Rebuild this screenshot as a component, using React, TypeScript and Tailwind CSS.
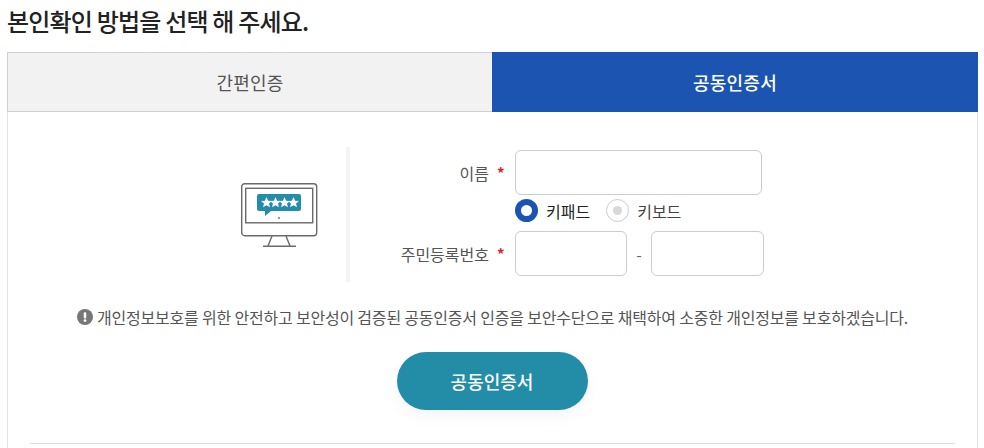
import React from 'react';

const font = { fontFamily: '"Noto Sans CJK KR", "Noto Sans", sans-serif' };

const Star = ({ x }: { x: number }) => (
  <path
    transform={`translate(${x} 14) scale(1.100)`}
    d="M5 0l1.400 3.300 3.600.3-2.700 2.300.8 3.500L5 7.600 1.900 9.400l.8-3.500L0 3.600l3.600-.3z"
  />
);

const MonitorIcon = () => (
  <svg width="78" height="66" viewBox="0 0 78 66" fill="none">
    <rect x="0.700" y="0.700" width="75" height="52" rx="3" stroke="#6a6a6a" strokeWidth="1.400" />
    <rect x="4.700" y="5.300" width="67" height="34.500" stroke="#6a6a6a" strokeWidth="1.400" />
    <path d="M31 53l-4 10M45 53l4 10M22 63.300h33" stroke="#6a6a6a" strokeWidth="1.400" />
    <path d="M18 11h40a2 2 0 0 1 2 2v13a2 2 0 0 1-2 2H30l-6 5v-5h-6a2 2 0 0 1-2-2V13a2 2 0 0 1 2-2z" fill="#238dab" />
    <g fill="#fff">
      <Star x={20} />
      <Star x={29} />
      <Star x={38} />
      <Star x={47} />
    </g>
    <circle cx="38" cy="35" r="1" fill="#777" />
  </svg>
);

const Label = ({ text }: { text: string }) => (
  <div className="flex w-[134px] items-center justify-end text-[16px] text-[#555]">
    <span>{text}</span>
    <span className="ml-[8px] w-[12px] text-[15px] leading-none font-bold text-[#e0202c]">*</span>
  </div>
);

const App = () => {
  return (
    <div className="h-[448px] w-[984px] overflow-hidden bg-white pl-[7px]" style={font}>
      <h2 className="h-[52px] pt-[3px] text-[24px] leading-[36px] font-medium tracking-[-0.8px] text-[#222]">
        본인확인 방법을 선택 해 주세요.
      </h2>
      <div className="w-[971px]">
        <div className="flex h-[60px] text-[18px] tracking-[0.2px]">
          <div className="flex w-[485px] items-center justify-center border border-r-0 border-[#d0d0d0] bg-[#f2f2f2] text-[#555]">
            간편인증
          </div>
          <div className="flex w-[486px] items-center justify-center bg-[#1c54b2] font-medium text-white">
            공동인증서
          </div>
        </div>
        <div className="flex h-[336px] flex-col border-x border-[#e2e2e2] pt-[35px]">
          <div className="flex h-[135px]">
            <div className="flex w-[342px] items-center justify-end border-r-[4px] border-[#f3f3f3] pt-[2px] pr-[27px]">
              <MonitorIcon />
            </div>
            <div className="flex flex-col pt-[3px] pl-[25px]">
              <div className="flex h-[45px] items-center">
                <Label text="이름" />
                <div className="ml-[6px] h-[45px] w-[247px] rounded-md border border-[#cccccc]" />
              </div>
              <div className="mt-[4px] flex h-[23px] items-center pl-[140px] text-[16px]">
                <span className="h-[23px] w-[23px] rounded-full border-[6px] border-[#1c54b2] bg-white" />
                <span className="ml-[8px] text-[#222]">키패드</span>
                <span className="ml-[16px] flex h-[23px] w-[23px] items-center justify-center rounded-full border border-[#cccccc]">
                  <span className="h-[9px] w-[9px] rounded-full bg-[#d8d8dc]" />
                </span>
                <span className="ml-[8px] text-[#444]">키보드</span>
              </div>
              <div className="mt-[9px] flex h-[45px] items-center">
                <Label text="주민등록번호" />
                <div className="ml-[6px] h-[45px] w-[112px] rounded-md border border-[#cccccc]" />
                <span className="w-[24px] text-center text-[16px] text-[#666]">-</span>
                <div className="h-[45px] w-[113px] rounded-md border border-[#cccccc]" />
              </div>
            </div>
          </div>
          <p className="mt-[24px] flex h-[22px] items-center justify-center text-[16px] tracking-[-0.2px] text-[#555]">
            <svg width="16" height="16" viewBox="0 0 17 17" className="mr-[4px] shrink-0">
              <circle cx="8.500" cy="8.500" r="8.500" fill="#777" />
              <rect x="7.200" y="3.500" width="2.600" height="6.500" rx="1" fill="#fff" />
              <circle cx="8.500" cy="12.300" r="1.500" fill="#fff" />
            </svg>
            개인정보보호를 위한 안전하고 보안성이 검증된 공동인증서 인증을 보안수단으로 채택하여 소중한 개인정보를 보호하겠습니다.
          </p>
          <div className="mt-[24px] flex justify-center pr-[1px]">
            <button className="h-[58px] w-[191px] rounded-full bg-[#238da8] text-[18px] font-medium text-white shadow-[0_6px_14px_rgba(60,90,140,0.06)]">
              공동인증서
            </button>
          </div>
          <div className="mx-[22px] mt-[33px] border-t border-[#dddddd]" />
        </div>
      </div>
    </div>
  );
};

export default App;
